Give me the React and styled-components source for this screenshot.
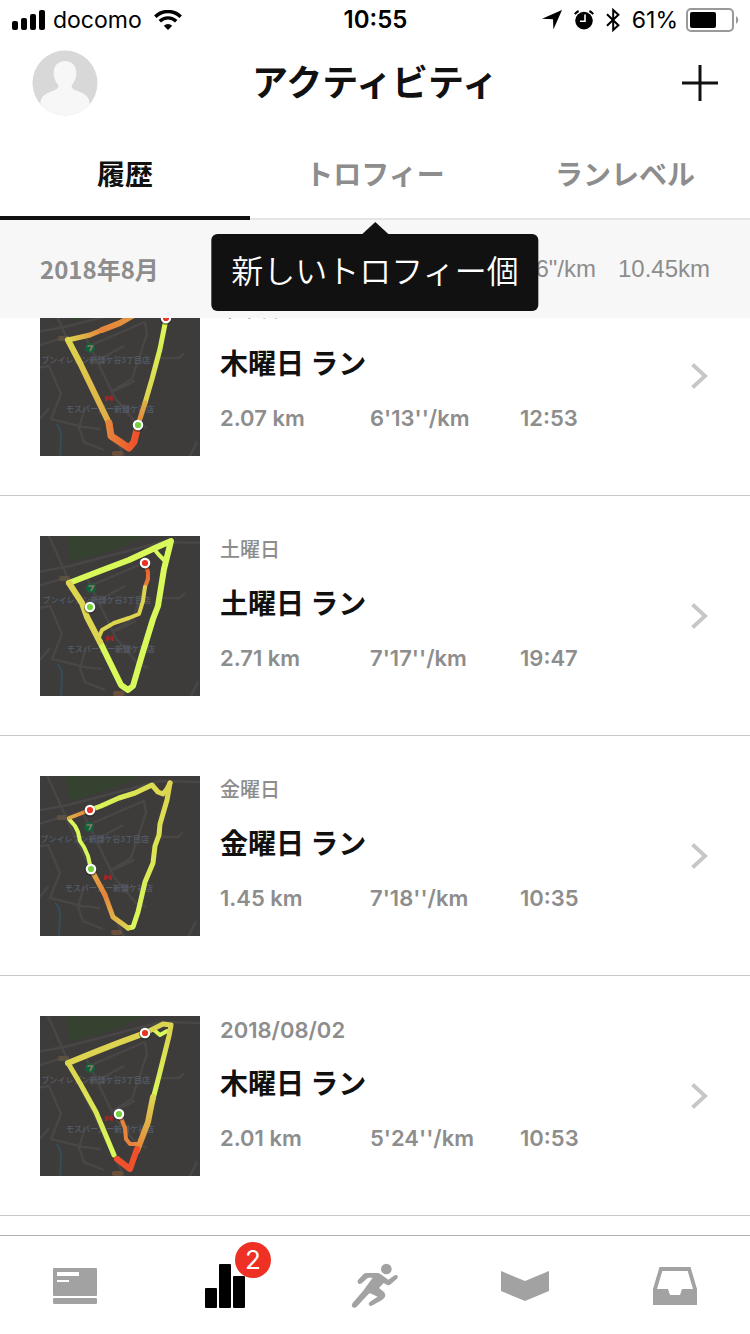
import React, { useLayoutEffect, useRef } from "react";
import styled, { createGlobalStyle } from "styled-components";

const ui = `Inter, "Noto Sans CJK JP", sans-serif`;
const jp = `"Noto Sans CJK JP", sans-serif`;

const GlobalStyle = createGlobalStyle`
  * { box-sizing: border-box; }
  body { margin: 0; background: #fff; color: #111; font-family: ${ui}; }
  button { border: 0; padding: 0; background: none; font: inherit; color: inherit; cursor: pointer; }
  a { color: inherit; text-decoration: none; }
  h1, h2, h3, p, ul { margin: 0; padding: 0; list-style: none; }
  svg { display: block; }
`;

const Screen = styled.div`
  display: flex;
  flex-direction: column;
  height: 100vh;
  background: #fff;
`;

const StatusBar = styled.div`
  display: grid;
  grid-template-columns: 1fr auto 1fr;
  align-items: center;
  height: 40px;
  padding: 0 11px 0 12px;
  font-size: 23px;
  line-height: 28px;
  color: #000;
`;

const StatusGroup = styled.div`
  display: flex;
  align-items: center;
  justify-content: ${(p) => (p.$end ? "flex-end" : "flex-start")};
  gap: ${(p) => p.$gap}px;
`;

const Clock = styled.time`
  font-size: 24px;
  font-weight: 600;
`;

const TitleBar = styled.header`
  display: grid;
  grid-template-columns: 1fr auto 1fr;
  align-items: center;
  height: 86px;
  padding: 0 32px;
`;

const Title = styled.h1`
  padding-bottom: 6px;
  font: 700 36px/48px ${jp};
`;

const IconButton = styled.button`
  justify-self: ${(p) => (p.$end ? "end" : "start")};
`;

const Tabs = styled.nav`
  position: relative;
  z-index: 3;
  display: grid;
  grid-template-columns: repeat(3, 1fr);
`;

const TabCell = styled.div`
  position: relative;
  display: flex;
`;

const Tab = styled.button`
  flex: 1;
  height: 94px;
  padding-top: ${(p) => (p.$active ? 4 : 2)}px;
  border-bottom: ${(p) => (p.$active ? "4px solid #111" : "2px solid #e5e5e5")};
  color: ${(p) => (p.$active ? "#111" : "#8d8d8d")};
  font: 700 28px/40px ${jp};
`;

const Tooltip = styled.div`
  position: absolute;
  top: 108px;
  left: 50%;
  transform: translateX(-50%);
  padding: 11px 20px 18px;
  border-radius: 6px;
  background: #111;
  color: #fff;
  font: 350 32px/48px ${jp};
  white-space: nowrap;

  &::before {
    content: "";
    position: absolute;
    left: 50%;
    bottom: 100%;
    transform: translateX(-50%);
    border: 13px solid transparent;
    border-top: 0;
    border-bottom: 12px solid #111;
  }
`;

const Scroller = styled.main`
  flex: 1;
  min-height: 0;
  overflow-y: auto;
  scrollbar-width: none;
  padding-bottom: 20px;
`;

const MonthHeader = styled.div`
  position: sticky;
  top: 0;
  z-index: 1;
  display: flex;
  align-items: center;
  justify-content: space-between;
  height: 98px;
  padding: 0 40px;
  background: #f7f7f7;
  color: #8d8d8d;
`;

const Month = styled.h2`
  font: 700 24px/40px ${jp};
`;

const Totals = styled.div`
  display: flex;
  gap: 22px;
  font: 400 24px/32px "Liberation Sans", sans-serif;
`;

const Run = styled.a`
  display: flex;
  align-items: center;
  gap: 20px;
  height: 240px;
  padding: 40px 40px 39px;
  border-bottom: 1px solid #c8c8c8;
`;

const RunBody = styled.div`
  flex: 1;
  align-self: stretch;
  display: flex;
  flex-direction: column;
  gap: 16px;
  color: #8d8d8d;
`;

const Day = styled.p`
  font: ${(p) => (p.$numeric ? "600 22px" : "500 20px")}/28px ${ui};
`;

const RunTitle = styled.h3`
  font: 700 28px/44px ${jp};
  color: #111;
`;

const Stats = styled.div`
  display: grid;
  grid-template-columns: 150px 150px 1fr;
  font: 600 22px/36px ${ui};
`;

const MapThumb = styled.svg`
  flex: none;
  width: 160px;
  height: 160px;
  background: #3e3c3b;
`;

const MapLabel = styled.text`
  font: 500 8px ${jp};
  fill: #555d69;
  text-anchor: end;
`;

const BottomNav = styled.nav`
  display: grid;
  grid-template-columns: repeat(5, 1fr);
  height: 99px;
  padding-top: 2px;
  border-top: 1px solid #b2b2b2;
`;

const NavItem = styled.a`
  display: flex;
  align-items: center;
  justify-content: center;
  color: ${(p) => (p.$active ? "#000" : "#a2a2a2")};
`;

const NavIcon = styled.span`
  position: relative;
`;

const Badge = styled.span`
  position: absolute;
  top: -22px;
  right: -26px;
  width: 36px;
  height: 36px;
  border-radius: 50%;
  background: #ee3124;
  color: #fff;
  font: 400 26px/36px ${ui};
  text-align: center;
`;

const Signal = () => (
  <svg width="33" height="20" aria-hidden="true">
    <rect x="0" y="11" width="6" height="9" rx="2" />
    <rect x="9" y="8" width="6" height="12" rx="2" />
    <rect x="18" y="4" width="6" height="16" rx="2" />
    <rect x="27" y="0" width="6" height="20" rx="2" />
  </svg>
);

const Wifi = () => (
  <svg width="28" height="20" viewBox="0 0 28 20" fill="none" stroke="#000" aria-hidden="true">
    <path d="M1.3 6.8a18 18 0 0 1 25.4 0" strokeWidth="3.6" />
    <path d="M5.8 11.3a11.6 11.6 0 0 1 16.4 0" strokeWidth="3.4" />
    <path d="M14 20l-4.2-4.3a6 6 0 0 1 8.4 0z" fill="#000" stroke="none" />
  </svg>
);

const LocationArrow = () => (
  <svg width="20" height="20" viewBox="0 0 20 20" aria-hidden="true">
    <path d="M20 0L11.4 19.6 11 9.3 0 8.7z" />
  </svg>
);

const Alarm = () => (
  <svg width="20" height="20" viewBox="0 0 20 20" aria-hidden="true">
    <circle cx="10" cy="10.6" r="8.8" />
    <path d="M.8 4.2A12 12 0 0 1 4.6 1M15.4 1a12 12 0 0 1 3.8 3.2" fill="none" stroke="#000" strokeWidth="2" />
    <path d="M11 4.6v6.6H6" fill="none" stroke="#fff" strokeWidth="1.6" />
  </svg>
);

const Bluetooth = () => (
  <svg width="14" height="24" viewBox="0 0 14 24" fill="none" stroke="#000" strokeWidth="2" aria-hidden="true">
    <path d="M1 6.3l11.4 11L7.2 22V2l5.2 4.7L1 17.7" />
  </svg>
);

const Battery = () => (
  <svg width="53" height="24" viewBox="0 0 53 24" aria-hidden="true">
    <rect x="1" y="1" width="46" height="22" rx="4" fill="none" stroke="#999" strokeWidth="2" />
    <rect x="4" y="4" width="26" height="16" rx="2" />
    <path d="M50 8a4.6 4.6 0 0 1 0 8z" fill="#999" />
  </svg>
);

const Avatar = () => (
  <svg width="66" height="66" viewBox="0 0 66 66">
    <defs>
      <clipPath id="avatarClip"><circle cx="33" cy="33" r="32.5" /></clipPath>
    </defs>
    <g clipPath="url(#avatarClip)">
      <rect width="66" height="66" fill="#d8d8d8" />
      <path d="M33 11c-7 0-11.3 5-11.3 11.5 0 6 2 9 4.3 12.5 1.2 2.5-1 4.500-4 5.500-6 2-13 5-13.500 11.500V66h49V52c-.5-6.500-7.500-9.500-13.500-11.500-3-1-5.200-3-4-5.500 2.300-3.500 4.300-6.500 4.300-12.500C44.300 16 40 11 33 11z" fill="#f7f7f7" />
    </g>
  </svg>
);

const Plus = () => (
  <svg width="36" height="36" stroke="#111" strokeWidth="3">
    <path d="M18 0v36M0 18h36" />
  </svg>
);

const Chevron = () => (
  <svg width="20" height="28" viewBox="0 0 20 28" fill="none" stroke="#c7c7c7" strokeWidth="4" aria-hidden="true">
    <path d="M2.500 2.500L15 14 2.500 25.500" />
  </svg>
);

const FeedIcon = () => (
  <svg width="44" height="40" fill="currentColor">
    <rect y="2" width="44" height="28" rx="1" />
    <rect y="32" width="44" height="6" rx="1" />
    <path d="M4 6h22v4H4zM4 14h12v2H4z" fill="#fff" />
  </svg>
);

const ActivityIcon = () => (
  <svg width="40" height="44" fill="currentColor">
    <rect y="24" width="12" height="20" rx="1" />
    <rect x="14" width="12" height="44" rx="1" />
    <rect x="28" y="12" width="12" height="32" rx="1" />
  </svg>
);

const RunnerIcon = () => (
  <svg width="60" height="60" viewBox="0 0 180 180" fill="currentColor">
    <circle cx="124" cy="39" r="16" />
    <path d="M39 72L56 54Q59 51 64 51H97Q102 51 106 54L130 71 149 58Q155 55 158 60 160 64 156 68L137 85Q131 90 125 86L116 81 102 96 116 107Q124 116 119 124 117 128 111 132L83 148Q76 152 72 147 69 141 75 137L98 122 76 112Q73 112 70 115L35 152Q28 158 22 153 18 147 23 141L54 105 83 65H69L50 82Q43 86 39 81 36 76 39 72z" />
  </svg>
);

const BookIcon = () => (
  <svg width="48" height="30" fill="currentColor">
    <path d="M0 0l24 10L48 0v20L24 30 0 20z" />
  </svg>
);

const InboxIcon = () => (
  <svg width="44" height="38" fill="currentColor">
    <path fillRule="evenodd" d="M6.500 0h31L44 22v16H0V22zM9.300 4L4 22h11l2 6h10l2-6h11L34.700 4z" />
  </svg>
);

/* Each leg of a route fades from one pace colour to the next. */
const LIME = "#d9f95a";
const YELLOW = "#ddd44f";
const AMBER = "#e0ac45";
const ORANGE = "#e5843a";
const RED = "#f0502a";

const runs = [
  {
    id: "r1", day: "木曜日", title: "木曜日 ラン", km: "2.07 km", pace: "6'13''/km", time: "12:53",
    shift: [-1, 0],
    legs: [
      { pts: "28,44 50,39 62,34", c: [YELLOW, ORANGE], w: 5 },
      { pts: "62,34 80,27 92,20 126,4", c: [ORANGE, AMBER], w: 6 },
      { pts: "126,23 120,53 112,83 105,107", c: [LIME, YELLOW], w: 5 },
      { pts: "105,107 98,129", c: [AMBER, ORANGE], w: 5 },
      { pts: "28,44 40,67 54,96 69,127", c: [YELLOW, AMBER], w: 6 },
      { pts: "69,127 71,140 89,152 94,146 98,129", c: [ORANGE, RED], w: 7 },
    ],
    end: [126, 22], start: [98, 129],
  },
  {
    id: "r2", day: "土曜日", title: "土曜日 ラン", km: "2.71 km", pace: "7'17''/km", time: "19:47",
    shift: [0, 0],
    legs: [
      { pts: "105,27 108,36 108,43 105,51", c: [RED, ORANGE], w: 4 },
      { pts: "105,51 103,65 99,78 89,82 74,87 62,94 59,101", c: [YELLOW, YELLOW], w: 4 },
      { pts: "114,13 119,19 124,24", c: [LIME, LIME], w: 4 },
      { pts: "29,47 60,35 89,24 115,12 131,5 124,33 118,70 113,83 102,119 93,150 88,154 81,149 60,106", c: [LIME, LIME], w: 6 },
      { pts: "29,47 42,67 47,81 60,106", c: [YELLOW, YELLOW], w: 6 },
    ],
    end: [105, 27], start: [50, 71],
  },
  {
    id: "r3", day: "金曜日", title: "金曜日 ラン", km: "1.45 km", pace: "7'18''/km", time: "10:35",
    shift: [-2, -1],
    legs: [
      { pts: "51,93 48,80 44,71 40,65 38,56 35,50 29,43", c: [LIME, LIME], w: 4 },
      { pts: "29,42 50,34", c: [AMBER, ORANGE], w: 4 },
      { pts: "50,34 61,30 79,22 95,17 112,9 118,16 123,18 127,13 130,7", c: [LIME, YELLOW], w: 5 },
      { pts: "130,7 127,24 120,48 119,59 115,70 113,87 105,106 98,136 93,151 88,152", c: [YELLOW, LIME], w: 5 },
      { pts: "88,152 73,141 65,119", c: [YELLOW, ORANGE], w: 5 },
      { pts: "65,119 51,93", c: [ORANGE, AMBER], w: 5 },
    ],
    end: [50, 34], start: [51, 93],
  },
  {
    id: "r4", day: "2018/08/02", numeric: true, title: "木曜日 ラン", km: "2.01 km", pace: "5'24''/km", time: "10:53",
    shift: [-1, 0],
    legs: [
      { pts: "79,97 85,112 86,123 90,128 97,128", c: [ORANGE, ORANGE], w: 4 },
      { pts: "114,14 120,19 127,15", c: [LIME, LIME], w: 4 },
      { pts: "28,47 55,36 78,27 105,17", c: [YELLOW, YELLOW], w: 6 },
      { pts: "105,17 123,8 131,9 129,20 119,60 113,83", c: [YELLOW, LIME], w: 5 },
      { pts: "113,81 108,106 97,135", c: [YELLOW, ORANGE], w: 6 },
      { pts: "28,47 41,69 56,96 74,139", c: [YELLOW, LIME], w: 5 },
      { pts: "97,133 90,153 77,143", c: [RED, RED], w: 6 },
    ],
    end: [105, 17], start: [79, 98],
  },
];

function RouteMap({ run }) {
  const [dx, dy] = run.shift;
  return (
    <MapThumb viewBox="0 0 160 160" role="img" aria-label={run.title}>
      <g transform={`translate(${dx} ${dy})`}>
        <path d="M27-1h80L86 9 62 17 31 26z" fill="#34422f" />
        <g fill="none" stroke="#494746" strokeWidth="2.4">
          <path d="M-2 36L30 30 122 6l42 1M8-2L36 60 88 166M46 40L76 102l22 26 10 4M-2 50l26-8M50 50l56-24 2 12-15 45-20 12M63 62l22-12M118 62h22l5-5M-2 72l12-2 12 28-10 25 32 8 18 2M10 112l-12 14M46 112l-6 20 5 14 20 8M75 95l21-10M158 146l-8 16" />
        </g>
        <path d="M17 128c8 6 4 18 4 34" fill="none" stroke="#364c59" strokeWidth="2" />
        <rect x="19" y="40" width="11" height="5" rx="2" fill="#5b5140" />
        <rect x="73" y="155" width="11" height="5" rx="2" fill="#6a4f3c" />
        <circle cx="51" cy="52" r="5" fill="#14603a" />
        <path d="M48.500 50h5l-2.500 5" fill="none" stroke="#8d7a68" strokeWidth="1.600" />
        <path d="M66 105v-4l2-2 2 3 2-3 2 2v4h-2l-2-2-2 2z" fill="#9e2626" />
        <MapLabel x="111" y="67">ブンイレブン新鎌ケ谷3丁目店</MapLabel>
        <MapLabel x="115" y="116">モスバーガー新鎌ケ谷店</MapLabel>
      </g>
      {run.legs.map((leg, i) => {
        const pts = leg.pts.split(" ").map((p) => p.split(","));
        const [a, b] = [pts[0], pts[pts.length - 1]];
        const id = `${run.id}-${i}`;
        return (
          <g key={id}>
            <linearGradient id={id} gradientUnits="userSpaceOnUse" x1={a[0]} y1={a[1]} x2={b[0]} y2={b[1]}>
              <stop offset="0" stopColor={leg.c[0]} />
              <stop offset="1" stopColor={leg.c[1]} />
            </linearGradient>
            <polyline points={leg.pts} fill="none" stroke={`url(#${id})`} strokeWidth={leg.w} strokeLinecap="round" strokeLinejoin="round" />
          </g>
        );
      })}
      {[[run.end, "#ea3323"], [run.start, "#74d13d"]].map(([p, color]) => (
        <g key={color}>
          <circle cx={p[0]} cy={p[1] + 1} r="6" fill="#222" opacity="0.5" />
          <circle cx={p[0]} cy={p[1]} r="4.200" fill={color} stroke="#fff" strokeWidth="2.200" />
        </g>
      ))}
    </MapThumb>
  );
}

const navItems = [
  { label: "フィード", Icon: FeedIcon },
  { label: "アクティビティ", Icon: ActivityIcon, active: true, badge: 2 },
  { label: "ラン", Icon: RunnerIcon },
  { label: "ガイド", Icon: BookIcon },
  { label: "受信箱", Icon: InboxIcon },
];

export default function App() {
  const scroller = useRef(null);
  useLayoutEffect(() => {
    scroller.current.scrollTop = 62;
  }, []);

  return (
    <Screen>
      <GlobalStyle />
      <StatusBar>
        <StatusGroup $gap={12}>
          <StatusGroup $gap={8}>
            <Signal />
            <span>docomo</span>
          </StatusGroup>
          <Wifi />
        </StatusGroup>
        <Clock>10:55</Clock>
        <StatusGroup $end $gap={12}>
          <LocationArrow />
          <Alarm />
          <Bluetooth />
          <StatusGroup $gap={8}>
            <span>61%</span>
            <Battery />
          </StatusGroup>
        </StatusGroup>
      </StatusBar>
      <TitleBar>
        <IconButton aria-label="プロフィール"><Avatar /></IconButton>
        <Title>アクティビティ</Title>
        <IconButton $end aria-label="追加"><Plus /></IconButton>
      </TitleBar>
      <Tabs>
        <TabCell><Tab $active>履歴</Tab></TabCell>
        <TabCell>
          <Tab>トロフィー</Tab>
          <Tooltip role="tooltip">新しいトロフィー個</Tooltip>
        </TabCell>
        <TabCell><Tab>ランレベル</Tab></TabCell>
      </Tabs>
      <Scroller ref={scroller}>
        <MonthHeader>
          <Month>2018年8月</Month>
          <Totals>
            <span>6'36"/km</span>
            <span>10.45km</span>
          </Totals>
        </MonthHeader>
        {runs.map((run) => (
          <Run key={run.id} href={`#${run.id}`}>
            <RouteMap run={run} />
            <RunBody>
              <Day $numeric={run.numeric}>{run.day}</Day>
              <RunTitle>{run.title}</RunTitle>
              <Stats>
                <span>{run.km}</span>
                <span>{run.pace}</span>
                <span>{run.time}</span>
              </Stats>
            </RunBody>
            <Chevron />
          </Run>
        ))}
      </Scroller>
      <BottomNav>
        {navItems.map(({ label, Icon, active, badge }) => (
          <NavItem key={label} href="#" aria-label={label} $active={active}>
            <NavIcon>
              <Icon />
              {badge && <Badge>{badge}</Badge>}
            </NavIcon>
          </NavItem>
        ))}
      </BottomNav>
    </Screen>
  );
}
